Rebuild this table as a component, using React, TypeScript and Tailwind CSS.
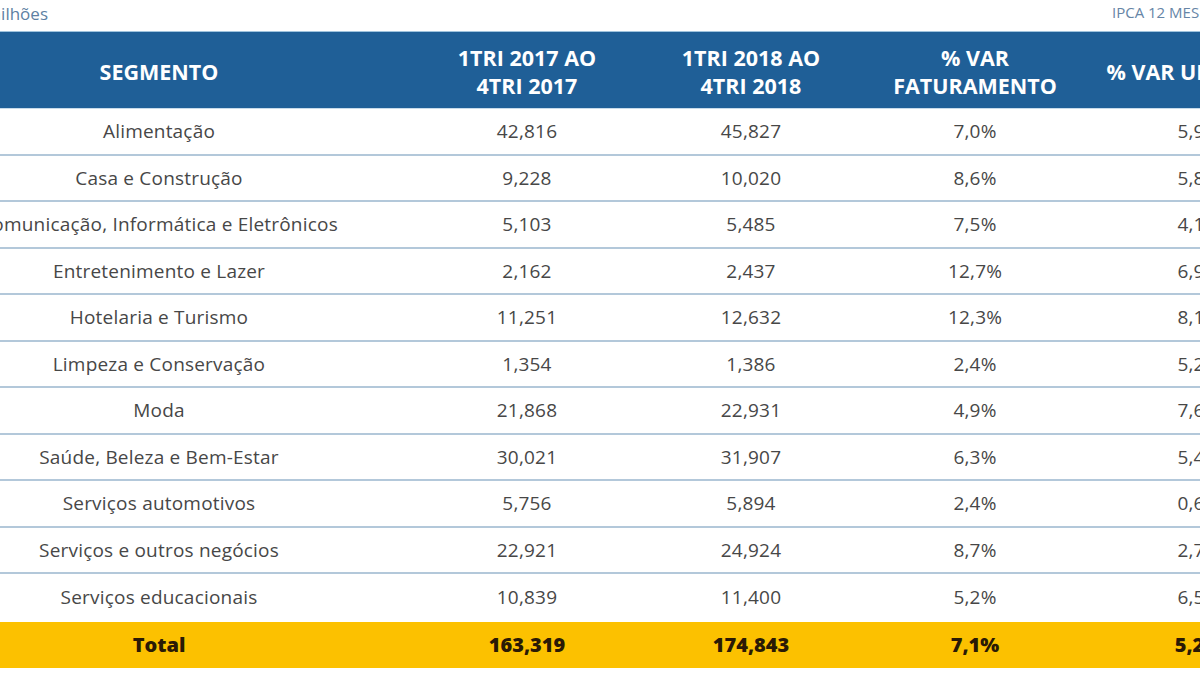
const rows = [
  ['Alimentação', '42,816', '45,827', '7,0%', '5,9%'],
  ['Casa e Construção', '9,228', '10,020', '8,6%', '5,8%'],
  ['Comunicação, Informática e Eletrônicos', '5,103', '5,485', '7,5%', '4,1%'],
  ['Entretenimento e Lazer', '2,162', '2,437', '12,7%', '6,9%'],
  ['Hotelaria e Turismo', '11,251', '12,632', '12,3%', '8,1%'],
  ['Limpeza e Conservação', '1,354', '1,386', '2,4%', '5,2%'],
  ['Moda', '21,868', '22,931', '4,9%', '7,6%'],
  ['Saúde, Beleza e Bem-Estar', '30,021', '31,907', '6,3%', '5,4%'],
  ['Serviços automotivos', '5,756', '5,894', '2,4%', '0,6%'],
  ['Serviços e outros negócios', '22,921', '24,924', '8,7%', '2,7%'],
  ['Serviços educacionais', '10,839', '11,400', '5,2%', '6,5%'],
]

const cols = 'grid grid-cols-[512px_224px_224px_224px_224px]'

export default function App() {
  return (
    <div className="h-[675px] w-[1200px] overflow-hidden bg-white font-['Open_Sans',sans-serif]">
      <div className="ml-[-97px] w-[1408px]">
        <div className="flex h-[31px] items-center justify-between">
          <div className="w-[145px] text-right text-[17px] text-[#5d7fa3] leading-none pb-[4px] whitespace-nowrap">
            Em R$ milhões
          </div>
          <div className="w-[199px] text-[15px] text-[#6685a6] pb-[6px] whitespace-nowrap">IPCA 12 MESES</div>
        </div>
        <div className="border-t border-[#9fc3dd]" />
        <div className={`${cols} h-[76px] items-center bg-[#1f5f97] pt-[3px] text-[21.5px] font-bold leading-[28px] text-white`}>
          <div className="text-center">SEGMENTO</div>
          <div className="text-center">1TRI 2017 AO<br />4TRI 2017</div>
          <div className="text-center">1TRI 2018 AO<br />4TRI 2018</div>
          <div className="text-center">% VAR<br />FATURAMENTO</div>
          <div className="whitespace-nowrap text-center">% VAR UNIDADES</div>
        </div>
        <div className="border-t border-[#c7dbea]" />
        {rows.map((r, i) => (
          <div
            key={r[0]}
            className={`${cols} h-[46.5px] items-center text-[19px] tracking-[0.2px] text-[#474747] ${
              i < rows.length - 1 ? 'border-b-2 border-[#b3c8da]' : ''
            }`}
          >
            {r.map((c, j) => (
              <div key={j} className="whitespace-nowrap text-center">
                {c}
              </div>
            ))}
          </div>
        ))}
        <div className={`${cols} mt-[1px] h-[46px] items-center bg-[#fcc100] text-[20px] font-extrabold text-[#2a1a05]`}>
          <div className="text-center">Total</div>
          <div className="text-center">163,319</div>
          <div className="text-center">174,843</div>
          <div className="text-center">7,1%</div>
          <div className="text-center">5,2%</div>
        </div>
      </div>
    </div>
  )
}
